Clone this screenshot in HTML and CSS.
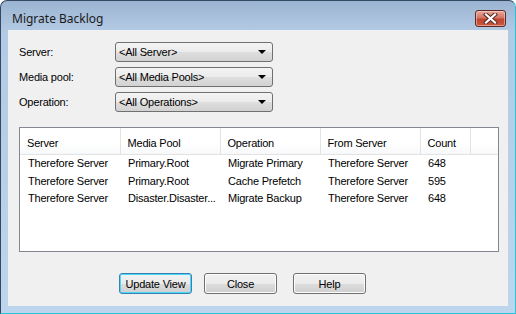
FILE: index.html
```html
<!DOCTYPE html>
<html lang="en">
<head>
    <meta charset="UTF-8">
    <title>Migrate Backlog</title>
    <link rel="stylesheet" href="styles.css">
</head>
<body>
<div class="window">
    <!-- title bar -->
    <div class="titlebar">
        <span class="title">Migrate Backlog</span>
        <div class="closeX">
            <svg width="15" height="11" viewBox="0 0 15 11">
                <path d="M3 1.5 L12 9.5 M12 1.5 L3 9.5" stroke="#5a2a24" stroke-width="4.2" stroke-linecap="square"/>
                <path d="M3 1.5 L12 9.5 M12 1.5 L3 9.5" stroke="#fff" stroke-width="2.2" stroke-linecap="square"/>
            </svg>
        </div>
    </div>
    <!-- client area -->
    <div class="client">
        <div class="filters">
            <label>Server:</label>
            <div class="combo"><span>&lt;All Server&gt;</span><i class="arrow"></i></div>
            <label>Media pool:</label>
            <div class="combo"><span>&lt;All Media Pools&gt;</span><i class="arrow"></i></div>
            <label>Operation:</label>
            <div class="combo"><span>&lt;All Operations&gt;</span><i class="arrow"></i></div>
        </div>

        <div class="list">
            <table>
                <colgroup>
                    <col class="c100"><col class="c100"><col class="c100"><col class="c100"><col class="c50"><col>
                </colgroup>
                <thead>
                <tr>
                    <th>Server</th><th>Media Pool</th><th>Operation</th><th>From Server</th><th>Count</th><th class="filler"></th>
                </tr>
                </thead>
                <tbody>
                <tr><td>Therefore Server</td><td>Primary.Root</td><td>Migrate Primary</td><td>Therefore Server</td><td>648</td><td></td></tr>
                <tr><td>Therefore Server</td><td>Primary.Root</td><td>Cache Prefetch</td><td>Therefore Server</td><td>595</td><td></td></tr>
                <tr><td>Therefore Server</td><td>Disaster.Disaster...</td><td>Migrate Backup</td><td>Therefore Server</td><td>648</td><td></td></tr>
                </tbody>
            </table>
        </div>

        <div class="buttons">
            <button class="btn default">Update View</button>
            <button class="btn">Close</button>
            <button class="btn help">Help</button>
        </div>
    </div>
</div>
</body>
</html>
```

FILE: styles.css
```css
body {
    margin: 0;
    font-family: "Liberation Sans", Arial, sans-serif;
    font-size: 11px;
    letter-spacing: -0.2px;
    color: #000;
}

.window {
    width: 516px;
    height: 314px;
    box-sizing: border-box;
    border: 1px solid #34495f;
    border-right-color: #24c4dc;
    border-bottom-color: #24c4dc;
    border-radius: 7px 7px 0 0;
    background: linear-gradient(#9bb4d1 0, #b3cae4 30px, #bdd5ed 100%);
    display: flex;
    flex-direction: column;
}

.titlebar {
    height: 29px;
    box-sizing: border-box;
    padding: 9px 9px 0 11px;
    display: flex;
    align-items: flex-start;
    justify-content: space-between;
}

.title {
    font-family: "Noto Sans", "Open Sans", sans-serif;
    font-size: 12px;
    line-height: 17px;
    letter-spacing: 0;
    color: #1a1a1a;
}

.closeX {
    width: 31px;
    height: 17px;
    box-sizing: border-box;
    border: 1px solid #5e2a25;
    border-radius: 3px;
    background: linear-gradient(#e8a99c 0, #d27563 45%, #c04430 55%, #c85a42 100%);
    display: flex;
    align-items: center;
    justify-content: center;
    box-shadow: inset 0 0 0 1px rgba(255, 220, 210, 0.5);
}

.closeX svg {
    display: block;
}

.client {
    margin: 0 7px;
    height: 276px;
    box-sizing: border-box;
    background: #f0f0f0;
    padding: 12px 0 0 11px;
}

.filters {
    display: grid;
    grid-template-columns: 96px 158px;
    grid-auto-rows: 20px;
    row-gap: 5px;
    align-items: center;
}

.combo {
    height: 20px;
    box-sizing: border-box;
    border: 1px solid #707070;
    border-radius: 3px;
    background: linear-gradient(#f4f4f4 0, #ebebeb 50%, #dedede 51%, #d2d2d2 100%);
    display: flex;
    align-items: center;
    justify-content: space-between;
    padding: 0 6px 0 3px;
}

.arrow {
    width: 0;
    height: 0;
    border-left: 4px solid transparent;
    border-right: 4px solid transparent;
    border-top: 4px solid #000;
}

.list {
    margin-top: 15px;
    width: 480px;
    height: 125px;
    box-sizing: border-box;
    border: 1px solid #828790;
    background: #fff;
}

table {
    border-collapse: collapse;
    table-layout: fixed;
    width: 478px;
}

.c100 {
    width: 100px;
}

.c50 {
    width: 50px;
}

th {
    height: 26px;
    box-sizing: border-box;
    font-weight: normal;
    text-align: left;
    padding: 4px 0 0 7px;
    border-right: 1px solid #e3e3e3;
    border-bottom: 1px solid #e3e3e3;
    background: linear-gradient(#fff 0, #fff 60%, #f7f8fa 100%);
}

th.filler {
    border-right: none;
}

td {
    height: 17.5px;
    padding: 0 0 0 8px;
    white-space: nowrap;
    overflow: hidden;
}

.buttons {
    margin: 21px 0 0 100px;
    display: flex;
    gap: 12px;
}

.btn {
    width: 73px;
    height: 21px;
    box-sizing: border-box;
    font-family: "Liberation Sans", Arial, sans-serif;
    font-size: 11px;
    letter-spacing: -0.2px;
    color: #000;
    border: 1px solid #707070;
    border-radius: 3px;
    background: linear-gradient(#f2f2f2 0, #ebebeb 50%, #dddddd 51%, #cfcfcf 100%);
    box-shadow: inset 0 0 0 1px #fcfcfc;
    padding: 0;
}

.btn.default {
    border-color: #3c7fb1;
    box-shadow: inset 0 0 0 1px #48d8fb;
}

.btn.help {
    margin-left: 4px;
}
```
